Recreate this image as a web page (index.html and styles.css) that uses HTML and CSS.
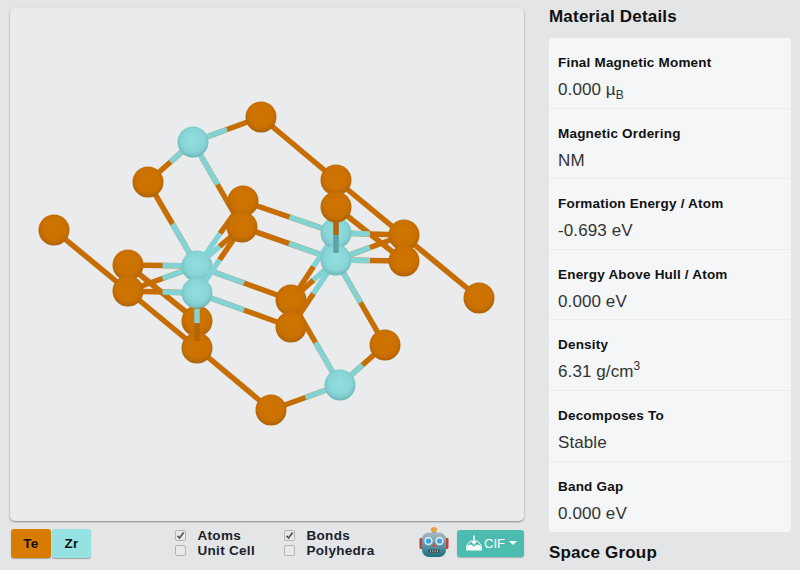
FILE: index.html
```html
<!DOCTYPE html>
<html lang="en">
<head>
<meta charset="utf-8">
<title>Material</title>
<link rel="stylesheet" href="styles.css">
</head>
<body>
<div class="page">
  <section class="viewer">
    <div class="canvas">
      <svg class="structure" width="514" height="513" viewBox="10 8 514 513">
        <defs>
          <radialGradient id="te" cx="50%" cy="44%" r="54%">
            <stop offset="0" stop-color="#d07500"/>
            <stop offset="0.7" stop-color="#cb7100"/>
            <stop offset="0.92" stop-color="#ba6804"/>
            <stop offset="1" stop-color="#ad6208"/>
          </radialGradient>
          <radialGradient id="zr" cx="50%" cy="44%" r="54%">
            <stop offset="0" stop-color="#93dfdf"/>
            <stop offset="0.7" stop-color="#87d5d6"/>
            <stop offset="0.92" stop-color="#7ac3c5"/>
            <stop offset="1" stop-color="#72b6b9"/>
          </radialGradient>
          <linearGradient id="robotFace" x1="0" y1="0" x2="0" y2="1">
            <stop offset="0" stop-color="#a9b8c2"/>
            <stop offset="0.5" stop-color="#5f9aa6"/>
            <stop offset="1" stop-color="#1f6f80"/>
          </linearGradient>
        </defs>
        <g class="te-bond">
          <line x1="261" y1="117" x2="336" y2="180"/>
          <line x1="336" y1="180" x2="479" y2="298"/>
          <line x1="336" y1="207" x2="404" y2="261"/>
          <line x1="54" y1="230" x2="128" y2="291"/>
          <line x1="128" y1="265" x2="197" y2="321"/>
          <line x1="128" y1="291" x2="197" y2="348"/>
          <line x1="197" y1="348" x2="271" y2="410"/>
          <line x1="193" y1="142" x2="261" y2="117"/>
          <line x1="193" y1="142" x2="148" y2="182"/>
          <line x1="340" y1="385" x2="385" y2="345"/>
          <line x1="340" y1="385" x2="271" y2="410"/>
          <line x1="193" y1="142" x2="242" y2="227"/>
          <line x1="148" y1="182" x2="197" y2="266"/>
          <line x1="243" y1="201" x2="336" y2="233"/>
          <line x1="242" y1="227" x2="336" y2="260"/>
          <line x1="128" y1="265" x2="197" y2="266"/>
          <line x1="128" y1="291" x2="197" y2="293"/>
          <line x1="128" y1="291" x2="197" y2="266"/>
          <line x1="197" y1="266" x2="291" y2="300"/>
          <line x1="197" y1="293" x2="291" y2="327"/>
          <line x1="291" y1="300" x2="340" y2="385"/>
          <line x1="336" y1="260" x2="385" y2="345"/>
          <line x1="336" y1="233" x2="404" y2="235"/>
          <line x1="336" y1="260" x2="404" y2="235"/>
          <line x1="336" y1="260" x2="404" y2="261"/>
        </g>
        <g class="zr-bond">
          <line x1="193" y1="142" x2="227" y2="129.5"/>
          <line x1="193" y1="142" x2="170.5" y2="162"/>
          <line x1="340" y1="385" x2="362.5" y2="365"/>
          <line x1="340" y1="385" x2="305.5" y2="397.5"/>
          <line x1="193" y1="142" x2="217.5" y2="184.5"/>
          <line x1="172.5" y1="224" x2="197" y2="266"/>
          <line x1="289.5" y1="217" x2="336" y2="233"/>
          <line x1="289" y1="243.5" x2="336" y2="260"/>
          <line x1="162.5" y1="265.5" x2="197" y2="266"/>
          <line x1="162.5" y1="292" x2="197" y2="293"/>
          <line x1="162.5" y1="278.5" x2="197" y2="266"/>
          <line x1="197" y1="266" x2="244" y2="283"/>
          <line x1="197" y1="293" x2="244" y2="310"/>
          <line x1="315.5" y1="342.5" x2="340" y2="385"/>
          <line x1="336" y1="260" x2="360.5" y2="302.5"/>
          <line x1="336" y1="233" x2="370" y2="234"/>
          <line x1="336" y1="260" x2="370" y2="247.5"/>
          <line x1="336" y1="260" x2="370" y2="260.5"/>
        </g>
        <g>
          <circle cx="261" cy="117" r="15.5" fill="url(#te)"/>
          <circle cx="148" cy="182" r="15.5" fill="url(#te)"/>
          <circle cx="336" cy="180" r="15.5" fill="url(#te)"/>
          <circle cx="404" cy="235" r="15.5" fill="url(#te)"/>
          <circle cx="54" cy="230" r="15.5" fill="url(#te)"/>
          <circle cx="128" cy="265" r="15.5" fill="url(#te)"/>
          <circle cx="197" cy="321" r="15.5" fill="url(#te)"/>
          <circle cx="385" cy="345" r="15.5" fill="url(#te)"/>
          <circle cx="479" cy="298" r="15.5" fill="url(#te)"/>
          <circle cx="271" cy="410" r="15.5" fill="url(#te)"/>
          <circle cx="193" cy="142" r="15.5" fill="url(#zr)"/>
          <circle cx="340" cy="385" r="15.5" fill="url(#zr)"/>
          <circle cx="243" cy="201" r="15.5" fill="url(#te)"/>
          <circle cx="291" cy="300" r="15.5" fill="url(#te)"/>
          <circle cx="197" cy="266" r="15.5" fill="url(#zr)"/>
        </g>
        <g class="te-bond">
          <line x1="220" y1="233.5" x2="234" y2="214"/>
          <line x1="219.5" y1="246.5" x2="242" y2="227"/>
          <line x1="219.5" y1="260" x2="242" y2="227"/>
          <line x1="298" y1="290" x2="313.5" y2="266.5"/>
          <line x1="298" y1="294" x2="313.5" y2="280"/>
          <line x1="291" y1="327" x2="313.5" y2="293.5"/>
        </g>
        <g class="zr-bond">
          <line x1="206" y1="254" x2="220" y2="233.5"/>
          <line x1="206" y1="258" x2="219.5" y2="246.5"/>
          <line x1="197" y1="293" x2="219.5" y2="260"/>
          <line x1="313.5" y1="266.5" x2="336" y2="233"/>
          <line x1="313.5" y1="280" x2="336" y2="260"/>
          <line x1="313.5" y1="293.5" x2="336" y2="260"/>
        </g>
        <g>
          <circle cx="336" cy="233" r="15.5" fill="url(#zr)"/>
          <circle cx="336" cy="260" r="15.5" fill="url(#zr)"/>
          <circle cx="197" cy="293" r="15.5" fill="url(#zr)"/>
          <circle cx="128" cy="291" r="15.5" fill="url(#te)"/>
          <circle cx="242" cy="227" r="15.5" fill="url(#te)"/>
          <circle cx="291" cy="327" r="15.5" fill="url(#te)"/>
          <circle cx="404" cy="261" r="15.5" fill="url(#te)"/>
          <circle cx="197" cy="348" r="15.5" fill="url(#te)"/>
          <circle cx="336" cy="207" r="15.5" fill="url(#te)"/>
        </g>
        <g class="te-bond-shade">
          <line x1="336" y1="222" x2="336" y2="235"/>
          <line x1="197" y1="322" x2="197" y2="341"/>
        </g>
        <g class="zr-bond-shade">
          <line x1="336" y1="235" x2="336" y2="253"/>
        </g>
        <g class="zr-bond">
          <line x1="197" y1="309" x2="197" y2="323"/>
        </g>
      </svg>
    </div>
    <div class="toolbar">
      <div class="elements">
        <span class="element te">Te</span>
        <span class="element zr">Zr</span>
      </div>
      <div class="toggles">
        <div class="toggle"><span class="box"><svg width="9" height="9" viewBox="0 0 9 9"><path d="M1.5 4.8 L3.6 7 L7.6 1.6" fill="none" stroke="#555" stroke-width="1.7"/></svg></span>Atoms</div>
        <div class="toggle"><span class="box"></span>Unit Cell</div>
      </div>
      <div class="toggles second">
        <div class="toggle"><span class="box"><svg width="9" height="9" viewBox="0 0 9 9"><path d="M1.5 4.8 L3.6 7 L7.6 1.6" fill="none" stroke="#555" stroke-width="1.7"/></svg></span>Bonds</div>
        <div class="toggle"><span class="box"></span>Polyhedra</div>
      </div>
      <svg class="robot" width="30" height="32" viewBox="0 0 30 32">
        <rect x="0.5" y="12" width="3.5" height="11" rx="1.2" fill="#c2413c"/>
        <rect x="26" y="12" width="3.5" height="11" rx="1.2" fill="#c2413c"/>
        <rect x="13" y="4" width="4" height="4" fill="#8a8f96"/>
        <ellipse cx="15" cy="3.6" rx="3.2" ry="2.6" fill="#e6a23c"/>
        <rect x="3" y="6.5" width="24" height="24.5" rx="7" fill="url(#robotFace)"/>
        <circle cx="9.5" cy="15" r="4.2" fill="#d9e8ee"/>
        <circle cx="20.5" cy="15" r="4.2" fill="#d9e8ee"/>
        <circle cx="9.5" cy="15" r="2.6" fill="#3f9fe0"/>
        <circle cx="20.5" cy="15" r="2.6" fill="#3f9fe0"/>
        <path d="M15 16.5 L17 21 L13 21 Z" fill="#d8483f"/>
        <rect x="9.5" y="23.5" width="11" height="3.5" rx="1.2" fill="#34464e"/>
        <path d="M11.5 24 V26.5 M13.8 24 V26.5 M16.2 24 V26.5 M18.5 24 V26.5" stroke="#b5c0c4" stroke-width="0.9"/>
      </svg>
      <button class="cif" type="button">
        <svg width="16" height="16" viewBox="0 0 16 16"><path d="M8 0.5 V8.5 M5.4 5.6 L8 8.8 L10.6 5.6" fill="none" stroke="#fff" stroke-width="1.5"/><path d="M4.2 5.8 H5.2 L2.9 8.6 Q1.2 10 1.2 11.5 V15 H14.8 V11.5 Q14.8 10 13.1 8.6 L10.8 5.8 H11.8 L14 8.2 Q15.8 10 15.8 11.5 V15.4 H0.2 V11.5 Q0.2 10 2 8.2 Z" fill="#fff"/><path d="M1.2 11 Q4 9 5 9.5 L8 11.5 L11 9.5 Q12 9 14.8 11 V15 H1.2 Z" fill="#fff"/></svg>
        <span>CIF</span>
        <i class="caret"></i>
      </button>
    </div>
  </section>
  <aside class="details">
    <h2>Material Details</h2>
    <div class="card">
      <div class="row"><div class="label">Final Magnetic Moment</div><div class="value">0.000 µ<sub>B</sub></div></div>
      <div class="row"><div class="label">Magnetic Ordering</div><div class="value">NM</div></div>
      <div class="row"><div class="label">Formation Energy / Atom</div><div class="value">-0.693 eV</div></div>
      <div class="row"><div class="label">Energy Above Hull / Atom</div><div class="value">0.000 eV</div></div>
      <div class="row"><div class="label">Density</div><div class="value">6.31 g/cm<sup>3</sup></div></div>
      <div class="row"><div class="label">Decomposes To</div><div class="value">Stable</div></div>
      <div class="row"><div class="label">Band Gap</div><div class="value">0.000 eV</div></div>
    </div>
    <h2 class="next">Space Group</h2>
  </aside>
</div>
</body>
</html>
```
FILE: styles.css
```css
* { box-sizing: border-box; }
html, body { margin: 0; height: 100%; overflow: hidden; }
body {
  background: #e4e5e7;
  color: #111;
  font-family: "Liberation Sans", Arial, sans-serif;
}
.page { display: flex; align-items: flex-start; height: 570px; }
.viewer { width: 514px; margin: 8px 0 0 10px; flex: none; }
.canvas {
  height: 513px;
  background: #e9ebed;
  border-radius: 5px;
  box-shadow: 0 1px 2px rgba(0,0,0,.4);
  overflow: hidden;
}
.structure { display: block; }
.te-bond line { stroke: #c66e03; stroke-width: 5.5; }
.zr-bond line { stroke: #83d3d4; stroke-width: 5.5; }
.te-bond-shade line { stroke: #b5640a; stroke-width: 5.5; }
.zr-bond-shade line { stroke: #5fa2a6; stroke-width: 5.5; }
.toolbar { display: flex; align-items: center; height: 30px; margin-top: 7px; }
.elements { display: flex; width: 165px; padding-left: 1px; }
.element {
  width: 40px;
  height: 29px;
  display: flex;
  align-items: center;
  justify-content: center;
  font-size: 13.5px;
  font-weight: 700;
  letter-spacing: .3px;
  border-radius: 3px;
  box-shadow: 0 1px 1px rgba(0,0,0,.3);
}
.element.te { background: #d87c00; }
.element.zr { background: #96e2e2; margin-left: 1px; width: 39px; }
.toggles { display: flex; flex-direction: column; width: 109px; }
.toggles.second { width: 135px; }
.toggle {
  display: flex;
  align-items: center;
  height: 15px;
  font-size: 13.5px;
  font-weight: 700;
  letter-spacing: .3px;
  color: #1a1f2c;
}
.box {
  width: 11px;
  height: 11px;
  margin-right: 11.5px;
  background: #e9e9e9;
  border: 1px solid #b4b4b4;
  border-radius: 2px;
  display: flex;
  align-items: center;
  justify-content: center;
}
.robot { flex: none; margin-top: -3px; }
.cif {
  width: 67px;
  height: 27px;
  margin-left: 8px;
  padding: 0 0 0 9px;
  display: flex;
  align-items: center;
  gap: 2px;
  border: 0;
  border-radius: 3px;
  background: #4dbcb0;
  color: #fff;
  font: 400 13px "Liberation Sans", Arial, sans-serif;
  box-shadow: 0 1px 1px rgba(0,0,0,.25);
}
.caret {
  margin-left: 2px;
  border-left: 4px solid transparent;
  border-right: 4px solid transparent;
  border-top: 4px solid #fff;
}
.details { width: 242px; margin-left: 25px; flex: none; }
h2 { margin: 0; font-size: 17px; font-weight: 700; line-height: 18px; letter-spacing: .2px; padding-top: 8px; }
.card {
  margin-top: 12px;
  background: #f5f6f8;
  border-radius: 4px;
}
.row { height: 70.6px; padding: 17px 9px 0; border-bottom: 1.5px solid #ebecee; }
.row:last-child { border-bottom: 0; }
.label { font-size: 13.5px; font-weight: 700; letter-spacing: .2px; line-height: 16px; }
.value { font-size: 17px; line-height: 20px; margin-top: 9px; color: #333; letter-spacing: .1px; white-space: nowrap; }
sub, sup { font-size: 12px; line-height: 0; }
h2.next { padding-top: 12px; }
```
